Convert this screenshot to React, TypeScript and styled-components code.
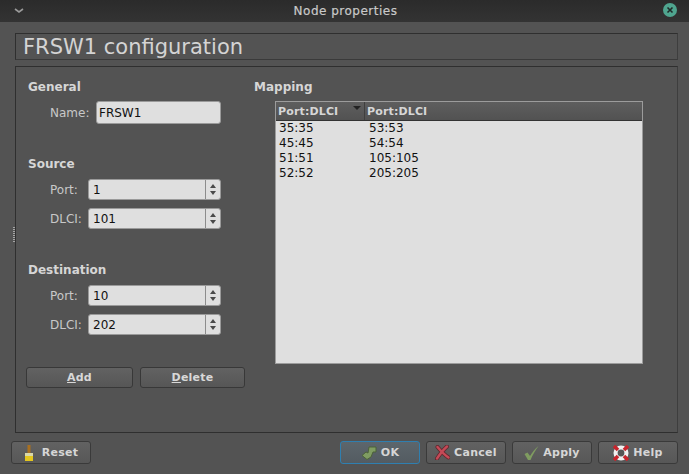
import React from 'react';
import styled, { createGlobalStyle } from 'styled-components';

const GlobalStyle = createGlobalStyle`
  html, body {
    margin: 0;
    padding: 0;
    background: #535353;
  }
  body {
    font-family: "DejaVu Sans", sans-serif;
    font-size: 12px;
    color: #dcdcdc;
  }
`;

const Window = styled.div`
  width: 689px;
  height: 474px;
  display: flex;
  flex-direction: column;
  overflow: hidden;
  background: #535353;
`;

const TitleBar = styled.header`
  height: 22px;
  flex: none;
  display: grid;
  grid-template-columns: 1fr auto 1fr;
  align-items: center;
  padding: 0 12px 0 14px;
  background: linear-gradient(#2b2b2b, #333333);
`;

const WindowTitle = styled.span`
  font-size: 12px;
  font-weight: 400;
  letter-spacing: 0.5px;
  color: #c9c9c9;
  -webkit-text-stroke: 0.2px #c9c9c9;
`;

const CloseDot = styled.span`
  justify-self: end;
  width: 14px;
  height: 14px;
  border-radius: 50%;
  background: #4fa58f;
  display: flex;
  align-items: center;
  justify-content: center;
  margin-top: -3px;
`;

const Content = styled.div`
  flex: 1;
  position: relative;
  display: flex;
  flex-direction: column;
  padding: 11px 11px 9px 15px;
`;

const Banner = styled.div`
  height: 25px;
  box-sizing: content-box;
  border: 1px solid #2f2f2f;
  border-right-color: #3e3e3e;
  border-bottom-color: #3a3a3a;
  display: flex;
  align-items: center;
  padding-left: 7px;
  font-size: 21px;
  line-height: 26px;
  color: #d4d4d4;
`;

const Frame = styled.div`
  margin-top: 6px;
  height: 365px;
  border: 1px solid #2f2f2f;
  border-right-color: #3e3e3e;
  display: grid;
  grid-template-columns: 238px 1fr;
`;

const LeftPane = styled.section`
  display: flex;
  flex-direction: column;
  padding: 13px 0 0 12px;
`;

const RightPane = styled.section`
  display: flex;
  flex-direction: column;
  padding: 13px 34px 0 0;
`;

const GroupTitle = styled.h3<{ $gap?: number }>`
  margin: ${({ $gap }) => $gap ?? 0}px 0 0;
  font-size: 12px;
  line-height: 15px;
  font-weight: 700;
  color: #d6d6d6;
`;

const Row = styled.div<{ $top: number }>`
  margin-top: ${({ $top }) => $top}px;
  display: flex;
  align-items: center;
`;

const FieldLabel = styled.label<{ $width: number }>`
  width: ${({ $width }) => $width}px;
  padding-left: 22px;
  box-sizing: border-box;
  color: #c8c8c8;
`;

const TextBox = styled.div`
  width: 125px;
  height: 23px;
  box-sizing: border-box;
  border: 1px solid #9a9a9a;
  border-radius: 3px;
  background: #dfdfdf;
  color: #111;
  display: flex;
  align-items: center;
  padding-left: 2px;
`;

const SpinBox = styled.div`
  width: 133px;
  height: 21px;
  box-sizing: border-box;
  border: 1px solid #9a9a9a;
  border-radius: 3px;
  background: #dfdfdf;
  color: #111;
  display: flex;
  align-items: center;
`;

const SpinValue = styled.span`
  flex: 1;
  padding-left: 4px;
`;

const SpinArrows = styled.span`
  width: 14px;
  height: 100%;
  border-left: 1px solid #8c8c8c;
  display: flex;
  flex-direction: column;
  align-items: center;
  justify-content: center;
  gap: 3px;
`;

const ArrowUp = styled.i`
  width: 0;
  height: 0;
  border-left: 3.5px solid transparent;
  border-right: 3.5px solid transparent;
  border-bottom: 4px solid #4a4a4a;
`;

const ArrowDown = styled.i`
  width: 0;
  height: 0;
  border-left: 3.5px solid transparent;
  border-right: 3.5px solid transparent;
  border-top: 4px solid #4a4a4a;
`;

const ActionRow = styled.div`
  margin-top: 32px;
  margin-left: -2px;
  display: flex;
  gap: 7px;
`;

const ActionButton = styled.button<{ $width: number }>`
  width: ${({ $width }) => $width}px;
  height: 21px;
  padding: 0;
  border: 1px solid #383838;
  border-radius: 3px;
  background: linear-gradient(#626262, #565656);
  color: #d8d8d8;
  font-family: inherit;
  font-size: 11px;
  font-weight: 700;
  letter-spacing: 0.2px;
`;

const Table = styled.div`
  flex: 1;
  margin-left: 21px;
  height: 263px;
  box-sizing: border-box;
  border: 1px solid #9c9c9c;
  background: #dfdfdf;
  display: flex;
  flex-direction: column;
`;

const TableHead = styled.div`
  height: 18px;
  flex: none;
  display: grid;
  grid-template-columns: 88px 1fr;
  background: linear-gradient(#5e5e5e, #525252);
  border-bottom: 1px solid #333;
`;

const HeadCell = styled.div`
  display: flex;
  align-items: center;
  justify-content: space-between;
  padding: 0 3px 0 2px;
  font-size: 11px;
  font-weight: 700;
  letter-spacing: 0.15px;
  color: #d6d6d6;
  & + & {
    border-left: 1px solid #3f3f3f;
  }
`;

const SortArrow = styled.i`
  width: 0;
  height: 0;
  margin-bottom: 6px;
  border-left: 4px solid transparent;
  border-right: 4px solid transparent;
  border-top: 4px solid #222;
`;

const TableRow = styled.div`
  height: 15px;
  display: grid;
  grid-template-columns: 90px 1fr;
  line-height: 15px;
  color: #111;
  padding-left: 3px;
`;

const Handle = styled.div`
  position: absolute;
  left: 13px;
  top: 205px;
  width: 2px;
  height: 16px;
  background: repeating-linear-gradient(#a5a5a5 0 1px, transparent 1px 2px);
`;

const Footer = styled.footer`
  margin: 8px 0 0 -4px;
  display: flex;
  justify-content: space-between;
`;

const FooterGroup = styled.div`
  display: flex;
  gap: 6px;
`;

const DialogButton = styled.button<{ $primary?: boolean }>`
  width: 80px;
  height: 23px;
  box-sizing: border-box;
  padding: 0;
  border: 1px solid ${({ $primary }) => ($primary ? '#2f7fb0' : '#3a3a3a')};
  border-radius: 3px;
  background: ${({ $primary }) =>
    $primary ? 'linear-gradient(#5d666c, #535b61)' : 'linear-gradient(#626262, #575757)'};
  color: #d6d6d6;
  font-family: inherit;
  font-size: 11px;
  font-weight: 700;
  letter-spacing: 0.3px;
  display: flex;
  align-items: center;
  justify-content: center;
  gap: 4px;
`;

const Underlined = styled.span`
  text-decoration: underline;
`;

const Broom = () => (
  <svg width="10" height="16" viewBox="0 0 10 16" style={{ marginRight: 4 }}>
    <rect x="3.5" y="0" width="3" height="8" fill="#a9701f" />
    <rect x="1" y="8" width="8" height="3" fill="#d9d7a8" />
    <rect x="1" y="11" width="8" height="5" fill="#e4c61e" />
  </svg>
);

const OkIcon = () => (
  <svg width="16" height="14" viewBox="0 0 16 14">
    <path
      d="M8 1 L15 1 L15 6 L12 6 L10 11 L6 13.5 L1 9.5 L5 6 L7 7 Z"
      fill="#7f9c62"
      stroke="#4d6339"
      strokeWidth="1"
      strokeLinejoin="round"
    />
  </svg>
);

const CancelIcon = () => (
  <svg width="15" height="15" viewBox="0 0 15 15">
    <path d="M2 13.5 C5 9 8 5 12 1.5 M2.5 2 C5 5 9 9.5 13.5 12.5" fill="none" stroke="#5f262c" strokeWidth="4" strokeLinecap="round" />
    <path d="M2 13.5 C5 9 8 5 12 1.5 M2.5 2 C5 5 9 9.5 13.5 12.5" fill="none" stroke="#c44a57" strokeWidth="2.4" strokeLinecap="round" />
  </svg>
);

const CheckIcon = () => (
  <svg width="15" height="14" viewBox="0 0 15 14">
    <path d="M0.5 8 L3.5 6.5 L6 10 C8 6.5 11 3 14.5 0 C11.5 4 8.5 9 6.5 14 L4 14 Z" fill="#7f9c60" />
  </svg>
);

const HelpIcon = () => (
  <svg width="16" height="16" viewBox="0 0 16 16">
    <circle cx="8" cy="8" r="7.5" fill="#f0f0f0" />
    <path d="M1 1 L5 5 M15 1 L11 5 M1 15 L5 11 M15 15 L11 11" stroke="#c8242c" strokeWidth="3.6" />
    <circle cx="8" cy="8" r="3.4" fill="#555" />
  </svg>
);

const mappings = [
  ['35:35', '53:53'],
  ['45:45', '54:54'],
  ['51:51', '105:105'],
  ['52:52', '205:205'],
];

const SpinField = ({ label, value, top }: { label: string; value: string; top: number }) => (
  <Row $top={top}>
    <FieldLabel $width={60}>{label}</FieldLabel>
    <SpinBox>
      <SpinValue>{value}</SpinValue>
      <SpinArrows>
        <ArrowUp />
        <ArrowDown />
      </SpinArrows>
    </SpinBox>
  </Row>
);

export default function App() {
  return (
    <Window>
      <GlobalStyle />
      <TitleBar>
        <svg width="10" height="6" viewBox="0 0 10 6">
          <path d="M1 1 L5 4 L9 1" fill="none" stroke="#9a9a9a" strokeWidth="1.6" />
        </svg>
        <WindowTitle>Node properties</WindowTitle>
        <CloseDot>
          <svg width="8" height="8" viewBox="0 0 8 8">
            <path d="M1.5 1.5 L6.5 6.5 M6.5 1.5 L1.5 6.5" stroke="#1f2a28" strokeWidth="1.6" />
          </svg>
        </CloseDot>
      </TitleBar>
      <Content>
        <Banner>FRSW1 configuration</Banner>
        <Frame>
          <LeftPane>
            <GroupTitle>General</GroupTitle>
            <Row $top={6}>
              <FieldLabel $width={68}>Name:</FieldLabel>
              <TextBox>FRSW1</TextBox>
            </Row>
            <GroupTitle $gap={33}>Source</GroupTitle>
            <SpinField label="Port:" value="1" top={7} />
            <SpinField label="DLCI:" value="101" top={8} />
            <GroupTitle $gap={34}>Destination</GroupTitle>
            <SpinField label="Port:" value="10" top={7} />
            <SpinField label="DLCI:" value="202" top={8} />
            <ActionRow>
              <ActionButton $width={107}>
                <Underlined>A</Underlined>dd
              </ActionButton>
              <ActionButton $width={105}>
                <Underlined>D</Underlined>elete
              </ActionButton>
            </ActionRow>
          </LeftPane>
          <RightPane>
            <GroupTitle>Mapping</GroupTitle>
            <Row $top={6}>
              <Table>
                <TableHead>
                  <HeadCell>
                    Port:DLCI
                    <SortArrow />
                  </HeadCell>
                  <HeadCell>Port:DLCI</HeadCell>
                </TableHead>
                <div>
                  {mappings.map(([a, b]) => (
                    <TableRow key={a}>
                      <span>{a}</span>
                      <span>{b}</span>
                    </TableRow>
                  ))}
                </div>
              </Table>
            </Row>
          </RightPane>
        </Frame>
        <Handle />
        <Footer>
          <DialogButton>
            <Broom />
            Reset
          </DialogButton>
          <FooterGroup>
            <DialogButton $primary>
              <OkIcon />
              OK
            </DialogButton>
            <DialogButton>
              <CancelIcon />
              Cancel
            </DialogButton>
            <DialogButton>
              <CheckIcon />
              Apply
            </DialogButton>
            <DialogButton>
              <HelpIcon />
              Help
            </DialogButton>
          </FooterGroup>
        </Footer>
      </Content>
    </Window>
  );
}
